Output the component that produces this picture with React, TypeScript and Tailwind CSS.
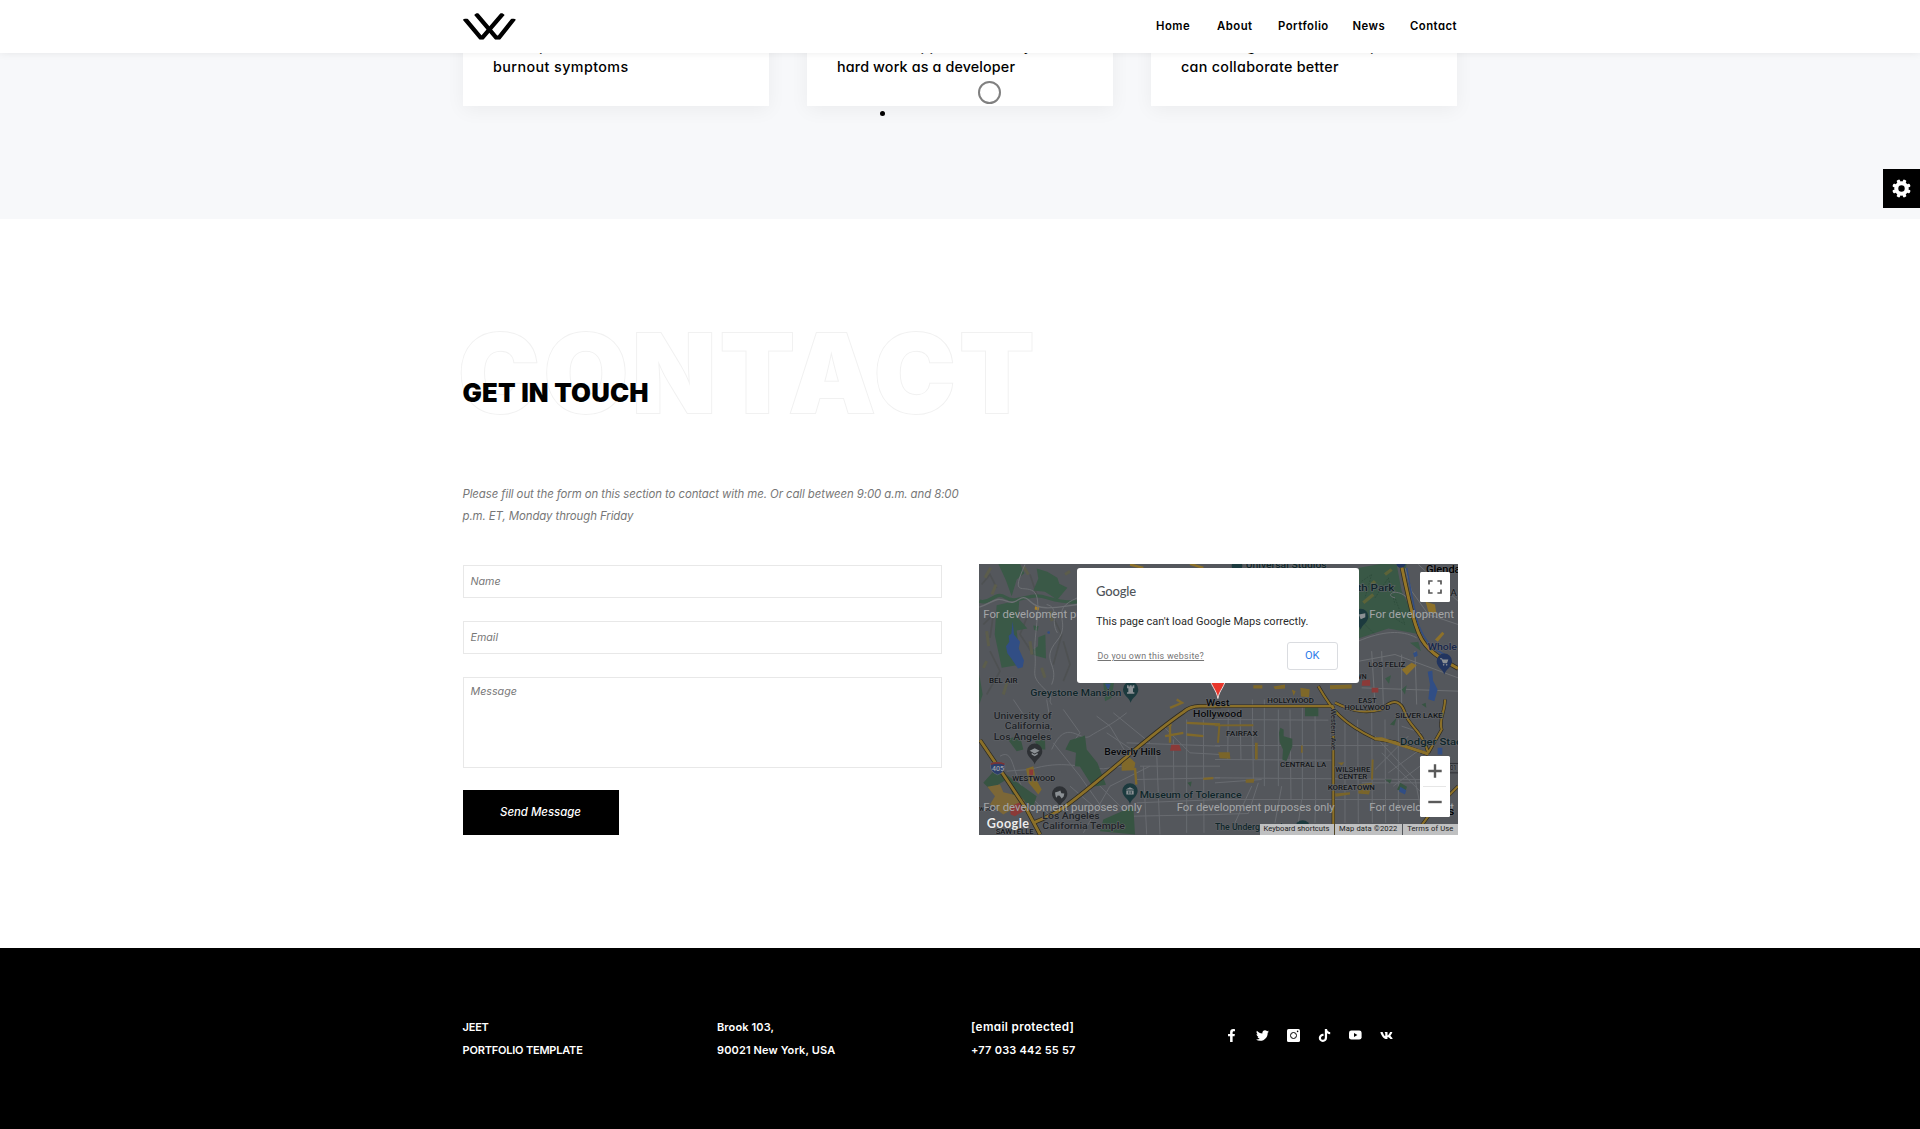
import React from "react";
import { FaFacebookF, FaTiktok, FaTwitter, FaVk } from "react-icons/fa";

const nav = [
  { label: "Home", cls: "w-[34px] mr-[27px]" },
  { label: "About", cls: "w-[35px] mr-[26px]" },
  { label: "Portfolio", cls: "w-[49px] mr-[25.5px]" },
  { label: "News", cls: "w-[32px] mr-[25.5px]" },
  { label: "Contact", cls: "w-[48px]" },
];

const cards = [
  { top: "The top causes of", bottom: "burnout symptoms", tracking: "tracking-[0.42px]" },
  { top: "How to be appreciated for your", bottom: "hard work as a developer", tracking: "tracking-[0.15px]" },
  { top: "How designers and developers", bottom: "can collaborate better", tracking: "tracking-[0.3px]" },
];

const gearTeeth = [22.5, 67.5, 112.5, 157.5, 202.5, 247.5, 292.5, 337.5];

function Logo() {
  return (
    <svg className="h-[27px] w-[53px]" viewBox="0 0 53 27" fill="none" stroke="#000" strokeWidth="4.3">
      <path d="M1.6 5.5 L17.6 24.6 H19.4 L40 0.6" clipPath="url(#cut)" />
      <path d="M51.2 5.5 L36 24.6 H33.2 L12.8 0.6" clipPath="url(#cut)" />
      <clipPath id="cut">
        <path d="M0 5.8 H10 V0.2 H43 V5.8 H53 V26.8 H0Z" />
      </clipPath>
    </svg>
  );
}

function Gear() {
  return (
    <svg className="size-[19px]" viewBox="-9.5 -9.5 19 19" fill="#fff">
      <circle r="7.2" />
      {gearTeeth.map((a) => (
        <rect key={a} x="-1.7" y="-9.3" width="3.4" height="4" rx="1.1" transform={`rotate(${a})`} />
      ))}
      <circle r="3.2" fill="#000" />
    </svg>
  );
}

function Instagram() {
  return (
    <svg className="size-[13px]" viewBox="0 0 13 13">
      <rect width="13" height="13" rx="1.6" fill="#fff" />
      <circle cx="6.5" cy="6.5" r="3" fill="none" stroke="#000" strokeWidth="1" />
      <circle cx="10.6" cy="2.4" r="0.8" fill="#000" />
    </svg>
  );
}

function Youtube() {
  return (
    <svg className="h-[10px] w-[13px]" viewBox="0 0 13 10">
      <rect y="0.4" width="12.6" height="9.2" rx="2.4" fill="#fff" />
      <path d="M5 3 L8.4 5 L5 7Z" fill="#000" />
    </svg>
  );
}

type LabelProps = {
  x: number;
  y: number;
  w: number;
  size: number;
  fill?: string;
  weight?: number;
  halo?: boolean;
  children: string;
};

function Label({ x, y, w, size, fill = "#131518", weight = 400, halo = true, children }: LabelProps) {
  return (
    <text
      x={x}
      y={y}
      textLength={w}
      lengthAdjust="spacingAndGlyphs"
      fontSize={size}
      fill={fill}
      fontWeight={weight}
      stroke={halo ? "#62656a" : "none"}
      strokeWidth={halo ? 3.5 : 0}
      paintOrder="stroke"
    >
      {children}
    </text>
  );
}

function Pin({ x, y, fill, children }: { x: number; y: number; fill: string; children?: React.ReactNode }) {
  return (
    <g transform={`translate(${x} ${y})`}>
      <path d="M0 38 C-4 22 -23 16 -23 -2 A23 23 0 0 1 23 -2 C23 16 4 22 0 38Z" fill={fill} />
      <g fill="#8b9094">{children}</g>
    </g>
  );
}

function MapCanvas() {
  const teal = "#1c3a3e";
  const tealText = "#0f2629";
  const gray = "#202327";
  return (
    <svg className="block h-full w-full" viewBox="979 564.5 479 270.5" preserveAspectRatio="none" fontFamily="Roboto, sans-serif">
      <rect x="979" y="564" width="479" height="272" fill="#54575c" />

      {/* north-west hills */}
      <g transform="translate(970 555) scale(.33333)">
        <g stroke="#4b4f4f" strokeWidth="5" fill="none" opacity=".7">
          <path d="M35 90 L60 60 L80 100 M40 210 L70 180 L60 250 M170 190 L150 240 L190 300 M240 170 L275 240 L250 330 M60 290 L90 350 L50 420 M180 60 L200 120 M280 260 L300 330 L280 380" />
        </g>
        <g stroke="#5c5d4c" strokeWidth="9" fill="none">
          <path d="M45 70 L62 40 M66 120 L78 90 M160 35 L175 60 M230 60 L250 85 M285 60 L300 50 M50 230 L56 275 M240 170 L246 200 M180 260 L186 300 M40 340 L50 320 M100 420 L112 380 M215 340 L225 370" />
        </g>
        <path d="M85 28 L150 28 L163 56 L140 75 L125 125 L108 78Z M200 42 L232 52 L262 70 L268 88 L292 100 L262 136 L225 112 L190 108 L205 72Z" fill="#3a5947" />
        <path d="M28 140 C60 152 75 108 105 128 S165 124 200 124 S250 146 322 142" stroke="#3a5947" strokeWidth="10" fill="none" />
        <path d="M80 152 L148 136 L144 190 L172 222 L140 228 L152 330 L95 340 L74 240Z M190 213 L206 215 L202 230 L192 226Z M205 248 L226 240 L228 312 L192 302 L190 285 L204 275Z" fill="#3a5947" />
        <path d="M128 200 L132 240 L150 262 L146 282 L162 318 L158 338 L144 342 L124 312 L112 296 L108 275 L118 262 L116 244 L124 238Z" fill="#314e85" />
        <path d="M195 155 L208 158 L206 168 L194 165Z" fill="#a77f2a" />
        <g stroke="#6c6f73" fill="none">
          <path d="M28 158 C70 145 75 125 110 140 S150 110 180 140 S250 160 322 150" strokeWidth="4" />
          <path d="M165 30 C120 130 160 90 190 110 S190 240 195 300 S180 360 220 400 S230 430 245 450 M322 130 C230 170 310 200 260 260 S270 330 245 390 M230 150 C270 160 240 200 262 235" strokeWidth="3" />
        </g>
        <circle cx="236" cy="234" r="4" fill="#314e85" />
        <path d="M28 360 L38 420 L28 450Z M400 385 L432 385 L425 430 L405 440Z" fill="#3a5947" />
        <path d="M405 388 L422 388 L415 408Z" fill="#314e85" />
        <path d="M480 30 L520 40 M660 28 L700 40" stroke="#8d712a" strokeWidth="7" />
      </g>

      {/* north-east */}
      <g transform="translate(1215 555) scale(.33333)">
        <path d="M432 40 L500 28 L545 30 L560 110 L600 190 L606 238 L520 222 L430 252Z M555 28 L575 28 L570 60Z" fill="#395846" />
        <path d="M440 80 L470 60 L450 130 M480 130 L520 70 L540 150 M440 200 L480 240 M520 180 L570 210 L540 130" stroke="#2d4a3a" strokeWidth="2.5" strokeDasharray="5 4" fill="none" />
        <path d="M445 145 L475 120 M510 60 L530 45 M470 90 L480 80" stroke="#5c6338" strokeWidth="10" />
        <g stroke="#6c6f73" strokeWidth="3" fill="none">
          <path d="M430 260 C500 230 560 225 605 250 M570 40 L590 110 L640 180 L729 210 M540 130 C500 120 560 90 590 150 M432 320 L540 300 L729 370 M470 290 L480 450 M500 290 L505 450 M560 300 L560 450 M600 290 L605 450 M440 400 L729 410 M610 30 L729 140" />
        </g>
        <path d="M560 35 C580 130 590 180 605 220 C620 270 650 300 729 342" stroke="#2c2920" strokeWidth="13" fill="none" />
        <path d="M560 35 C580 130 590 180 605 220 C620 270 650 300 729 342" stroke="#957628" strokeWidth="9" fill="none" />
        <path d="M575 40 C590 120 600 180 612 214 C630 262 655 285 690 300" stroke="#314e85" strokeWidth="4" fill="none" />
        <path d="M632 142 L660 150 L664 178 L640 172Z M660 255 L682 232 L688 238 L668 262Z M560 345 L590 325 L605 332 L575 362Z" fill="#8d712a" />
        <path d="M638 352 L652 348 L654 378 L668 405 L658 440 L640 434 L645 390Z M594 296 L606 290 L608 304 L598 308Z" fill="#314e85" />
        <path d="M585 265 L610 262 L618 290Z M510 372 L528 362 L522 388Z M560 405 L575 392 L570 420Z" fill="#3a5947" />
        <path d="M442 378 L465 376 L466 394 L440 394Z M470 400 L490 400 L490 414 L470 414Z" fill="#8b3a38" />
        <path d="M115 392 L142 392 L142 402 L115 402Z M175 396 L210 390 L210 402 L180 404Z M256 400 L284 404 L282 428 L258 426Z M345 392 L410 390 L410 402 L345 404Z M230 405 L242 410 L236 424Z" fill="#7f6829" />
      </g>

      {/* south-west */}
      <g transform="translate(970 700) scale(.33333)">
        <g stroke="#686b70" strokeWidth="3" fill="none">
          <path d="M110 215 L180 210 C280 180 330 205 400 208 L460 200 M245 150 C290 50 330 130 360 110 S420 80 470 40 M280 30 L330 100 L300 140 M380 50 L420 80 L480 180 M410 100 L500 160 M400 330 L330 230 L250 130 M90 170 C140 140 120 250 190 300 L240 350 M340 400 L420 260 L540 200 M520 200 L530 405 M560 160 L570 405 M610 120 L612 300 M650 60 L650 400 M700 60 L702 400 M500 240 L750 235 M500 310 L750 300 M510 200 L750 200 M470 130 L750 140 M430 40 L540 130 M130 0 L170 60 M230 0 L240 60 M490 350 L750 345 M380 250 L480 350 M580 80 L660 160 L750 165 M300 260 L370 320" />
        </g>
        <path d="M300 122 L345 108 L350 150 L382 190 L408 256 L368 262 L330 202 L315 200 L318 160 L286 150Z M40 250 L80 205 L200 290 L190 320 L130 290 L110 240 L60 270Z M490 320 L495 405 L390 395 L400 360Z M112 118 L150 110 L160 150 L140 155Z M195 125 L225 120 L226 150 L205 150Z M652 250 L665 246 L662 262Z M30 0 L34 60Z" fill="#375442" />
        <path d="M52 262 L90 255 L100 278 L150 290 L165 305 L100 345 L60 315 L75 290Z" fill="#7c6737" />
        <path d="M455 180 L480 175 L496 190 L492 212 L455 214Z M168 208 L176 250 L205 285 L215 270 L196 235 L190 200Z" fill="#80692a" />
        <path d="M495 205 L499 255 M570 85 L605 75 M585 110 L640 100 M620 0 L636 10 L600 25 M650 70 L750 75 M650 105 L700 110 M700 238 L730 236 M600 60 L600 130" stroke="#80692a" strokeWidth="7" fill="none" />
        <path d="M178 210 L190 210 L189 230 L178 226Z M120 322 L150 308 L160 335 L135 350 L122 345Z M604 136 L628 136 L634 154 L600 154Z" fill="#8b3a38" />
        <path d="M30 122 L100 225 L170 330 L210 405 M190 370 C240 350 260 340 300 310 C420 220 540 105 640 38 Q660 20 690 20 L752 20" stroke="#2c2920" strokeWidth="13" fill="none" />
        <path d="M30 122 L100 225 L170 330 L210 405 M190 370 C240 350 260 340 300 310 C420 220 540 105 640 38 Q660 20 690 20 L752 20" stroke="#8b7029" strokeWidth="8.5" fill="none" />
        <path d="M62 192 Q83 184 104 192 Q108 218 83 226 Q58 218 62 192Z" fill="#2c3e6b" stroke="#777b80" strokeWidth="1.5" />
        <path d="M62 194 Q83 186 104 194" stroke="#7a3434" strokeWidth="5" fill="none" />
      </g>

      {/* south-east */}
      <g transform="translate(1215 700) scale(.33333)">
        <g stroke="#686b70" strokeWidth="3" fill="none">
          <path d="M0 60 L340 62 M0 138 L520 138 M0 235 L620 240 M0 250 L140 240 M0 300 L620 300 M0 180 L350 182 M40 30 L38 180 M75 30 L78 180 M112 0 L115 240 M148 0 L148 260 M190 30 L190 260 M225 30 L228 300 M262 20 L262 300 M300 20 L302 300 M390 60 L390 370 M428 60 L430 370 M470 0 L472 370 M510 60 L512 370 M550 60 L550 370 M0 345 L100 342 L130 250 M60 370 L110 260 M180 370 L200 260 M250 370 L260 300 M300 370 L302 300 M480 110 L600 240 L620 340 M520 220 L615 150 M535 260 L615 200 M480 210 L580 110 M500 160 L620 280 M440 250 L620 250 M590 330 L700 350 M560 80 L620 100" />
        </g>
        <path d="M196 85 L206 90 L206 110 L232 118 L232 140 L214 185 L202 180 L204 150 L194 128 L192 100Z M270 22 L310 22 L310 50 L270 50Z M525 75 L545 55 L538 78Z M510 240 L530 240 L525 252Z M556 250 L576 262 L570 280 L546 270Z M620 15 L632 10 L634 25Z" fill="#375442" />
        <path d="M668 145 L682 145 L682 165 L668 165Z M556 262 L574 272 L570 285 L552 276Z" fill="#314e85" />
        <path d="M10 158 L44 158 L46 178 L14 176Z M120 130 L128 130 L128 180 L120 180Z M258 138 L263 138 L263 160 L258 160Z M92 240 L118 238 L116 250 L92 250Z M0 75 L115 74 L115 80 L0 80Z M10 80 L16 80 L12 130 L6 130Z M470 180 L476 180 L474 240 L468 240Z M368 190 L388 188 L380 198Z M360 282 L405 278 L405 285 L362 292Z M430 255 L472 250 L462 285 L430 282Z" fill="#7a652a" />
        <g fill="none">
          <path d="M0 20 L355 20 M355 20 L355 405 M310 -40 C350 30 380 70 480 118 L540 128 L640 165 M360 10 C420 40 460 40 500 30 C540 -10 560 10 570 40 C580 80 620 90 640 160 M690 0 C690 40 670 60 680 90 L640 160 M600 405 L640 350 L729 260" stroke="#2c2920" strokeWidth="10" />
          <path d="M0 20 L355 20 M355 20 L355 405 M310 -40 C350 30 380 70 480 118 L540 128 L640 165 M360 10 C420 40 460 40 500 30 C540 -10 560 10 570 40 C580 80 620 90 640 160 M690 0 C690 40 670 60 680 90 L640 160 M600 405 L640 350 L729 260" stroke="#8b7029" strokeWidth="6.5" />
        </g>
        <path d="M480 118 L500 118 L640 163" stroke="#8b7029" strokeWidth="9" fill="none" />
      </g>

      {/* pins and labels */}
      <g transform="translate(970 555) scale(.33333)">
        <Label x={57} y={386} w={86} size={20} weight={500}>BEL AIR</Label>
        <Label x={181} y={424} w={273} size={29} fill={tealText} weight={500}>Greystone Mansion</Label>
        <Pin x={482} y={407} fill={teal}>
          <path d="M-11 -15 H-6 V-11 H-3 V-15 H3 V-11 H6 V-15 H11 V-6 H7 V6 H11 V11 H-11 V6 H-7 V-6 H-11Z" />
        </Pin>
        <Label x={40} y={192} w={400} size={31} fill="#a4a6a8" halo={false}>For development purposes</Label>
      </g>
      <g transform="translate(1215 555) scale(.33333)">
        <circle cx="66" cy="34" r="16" fill={teal} />
        <Label x={92} y={41} w={243} size={25} fill={tealText} weight={500}>Universal Studios</Label>
        <Label x={375} y={109} w={163} size={29} fill={tealText} weight={500}>riffith Park</Label>
        <Label x={633} y={55} w={130} size={34} weight={500} fill="#000">Glendale</Label>
        <Label x={706} y={126} w={20} size={26}>A</Label>
        <Pin x={437} y={188} fill={teal}>
          <path d="M-5 -8 L14 -12 V0 L0 6Z" />
        </Pin>
        <circle cx="558" cy="26" r="14" fill="#22355f" />
        <Label x={463} y={192} w={254} size={31} fill="#a4a6a8" halo={false}>For development</Label>
        <Label x={638} y={286} w={88} size={29} fill="#18264a" weight={500}>Whole</Label>
        <Pin x={688} y={322} fill="#22355f">
          <path d="M-13 -11 H-7 L-5 -7 H12 L8 4 H-4 L-9 -8 H-13Z" />
          <circle cx="-2" cy="9" r="2.5" />
          <circle cx="7" cy="9" r="2.5" />
        </Pin>
        <Label x={460} y={338} w={111} size={20} weight={500}>LOS FELIZ</Label>
        <Label x={395} y={373} w={60} size={20} weight={500}>TOWN</Label>
        <Label x={157} y={446} w={140} size={20} weight={500}>HOLLYWOOD</Label>
        <Label x={430} y={446} w={55} size={20} weight={500}>EAST</Label>
      </g>
      <g transform="translate(970 700) scale(.33333)">
        <Label x={71} y={58} w={174} size={29} fill={gray} weight={500}>University of</Label>
        <Label x={104} y={90} w={143} size={29} fill={gray} weight={500}>California,</Label>
        <Label x={71} y={121} w={173} size={29} fill={gray} weight={500}>Los Angeles</Label>
        <Pin x={194} y={157} fill="#2e3135">
          <path d="M-15 -3 L0 -11 L15 -3 L0 5Z M-9 3 L0 8 L9 3 V8 L0 13 L-9 8Z" />
        </Pin>
        <Label x={66} y={216} w={36} size={19} fill="#9ea2a8" halo={false} weight={500}>405</Label>
        <Label x={127} y={244} w={129} size={20} weight={500}>WESTWOOD</Label>
        <Pin x={269} y={285} fill="#2e3135">
          <path d="M-14 -6 L-4 -9 L2 -12 L5 -4 L14 -3 L12 6 L6 12 L0 4 L-6 3 L-9 10 L-12 6Z" />
        </Pin>
        <Label x={403} y={167} w={170} size={29} fill="#08090a" weight={500}>Beverly Hills</Label>
        <Pin x={480} y={276} fill={teal}>
          <path d="M0 -13 L13 -6 H-13Z M-11 -3 H11 V9 H-11Z" />
          <path d="M-5 -1 H-2 V7 H-5Z M2 -1 H5 V7 H2Z" fill={teal} />
        </Pin>
        <Label x={509} y={296} w={306} size={29} fill={tealText} weight={500}>Museum of Tolerance</Label>
        <Label x={217} y={358} w={172} size={29} fill={gray} weight={500}>Los Angeles</Label>
        <Label x={217} y={389} w={248} size={29} fill={gray} weight={500}>California Temple</Label>
        <Label x={77} y={403} w={114} size={20} weight={500}>SAWTELLE</Label>
        <Label x={28} y={334} w={48} size={20}>wood</Label>
        <Label x={40} y={336} w={476} size={31} fill="#a4a6a8" halo={false}>For development purposes only</Label>
        <Label x={620} y={336} w={474} size={31} fill="#a4a6a8" halo={false}>For development purposes only</Label>
        <text x="50" y="386" fontFamily="Lato, sans-serif" fontWeight="700" fontSize="38" textLength="127" fill="#ececec" stroke="#4a4d51" strokeWidth="3" paintOrder="stroke">Google</text>
      </g>
      <g transform="translate(1215 700) scale(.33333)">
        <Label x={-27} y={20} w={70} size={29} fill="#08090a" weight={500}>West</Label>
        <Label x={-66} y={52} w={147} size={29} fill="#08090a" weight={500}>Hollywood</Label>
        <Label x={388} y={32} w={138} size={20} weight={500}>HOLLYWOOD</Label>
        <Label x={541} y={57} w={142} size={20} weight={500}>SILVER LAKE</Label>
        <Label x={33} y={111} w={95} size={20} weight={500}>FAIRFAX</Label>
        <Label x={555} y={136} w={196} size={29} fill={tealText} weight={500}>Dodger Stadi</Label>
        <Label x={195} y={202} w={139} size={20} weight={500}>CENTRAL LA</Label>
        <Label x={361} y={219} w={105} size={20} weight={500}>WILSHIRE</Label>
        <Label x={369} y={240} w={88} size={20} weight={500}>CENTER</Label>
        <Label x={338} y={273} w={142} size={20} weight={500}>KOREATOWN</Label>
        <g transform="translate(348 27) rotate(90)">
          <Label x={0} y={0} w={124} size={20}>Western Ave</Label>
        </g>
        <rect x="690" y="192" width="50" height="28" rx="8" fill="#54575c" stroke="#303338" strokeWidth="3" />
        <Label x={705} y={213} w={20} size={20}>01</Label>
        <Label x={0} y={391} w={202} size={29} fill={tealText} weight={500}>The Underground</Label>
        <circle cx="263" cy="384" r="22" fill={teal} />
        <Label x={463} y={336} w={254} size={31} fill="#a4a6a8" halo={false}>For development</Label>
        <Label x={698} y={347} w={20} size={34} fill="#000" weight={500}>s</Label>
      </g>

      {/* location marker */}
      <path d="M1208.5 676 H1226.5 C1225 688 1219.4 690 1217.9 699 C1216.4 690 1210.5 686 1208.5 676Z" fill="#e8372c" stroke="#fff" strokeWidth=".8" />
    </svg>
  );
}

function MapPanel() {
  return (
    <div className="relative h-[270.5px] w-[479px] overflow-hidden font-[Roboto,sans-serif]">
      <MapCanvas />
      <div className="absolute left-[98px] top-[3.8px] flex h-[115px] w-[282.5px] flex-col rounded-[3px] bg-white pl-[19.5px] pr-[21px]">
        <div className="mt-[14px] h-[18px] font-[Lato,sans-serif] text-[13px] font-medium leading-[18px] tracking-[-0.15px] text-[#4f5459]">Google</div>
        <div className="mt-[14.5px] h-[16px] whitespace-nowrap text-[11px] leading-[16px] tracking-[0px] text-[#2b2b2b]">This page can't load Google Maps correctly.</div>
        <div className="mt-[12px] flex items-center justify-between">
          <span className="ml-[1.5px] whitespace-nowrap text-[8.9px] leading-[12px] tracking-[0.28px] text-[#757575] underline">Do you own this website?</span>
          <span className="flex h-[27.5px] w-[51.5px] items-center justify-center rounded-[3px] border border-[#dadce0] text-[11px] text-[#2d7bea]">OK</span>
        </div>
      </div>
      <div className="absolute left-[441px] top-[7.5px] flex size-[30.5px] items-center justify-center rounded-[1.5px] bg-white">
        <svg className="size-[14px]" viewBox="0 0 14 14" fill="none" stroke="#555" strokeWidth="1.7">
          <path d="M1 4.6 V1 H4.6 M9.4 1 H13 V4.6 M13 9.4 V13 H9.4 M4.6 13 H1 V9.4" />
        </svg>
      </div>
      <div className="absolute left-[441px] top-[191.5px] flex h-[61px] w-[30.5px] flex-col items-center rounded-[1.5px] bg-white">
        <svg className="h-[30px] w-[14px]" viewBox="0 0 14 30" stroke="#5a5a5a" strokeWidth="2.4">
          <path d="M0.3 15 H13.7 M7 8.3 V21.7" />
        </svg>
        <div className="h-px w-[23px] bg-[#e6e6e6]" />
        <svg className="h-[30px] w-[14px]" viewBox="0 0 14 30" stroke="#5a5a5a" strokeWidth="2.4">
          <path d="M0.3 15 H13.7" />
        </svg>
      </div>
      <div className="absolute bottom-0 right-0 flex h-[10.5px] items-center text-[7.6px] leading-[10px] whitespace-nowrap text-[#1b1b1b]">
        <span className="flex h-full w-[74px] items-center justify-center bg-[#bfc0c1]">Keyboard shortcuts</span>
        <span className="ml-px flex h-full w-[67.5px] items-center justify-center bg-[#bfc0c1] tracking-[0.1px]">Map data ©2022</span>
        <span className="ml-px flex h-full w-[54.5px] items-center justify-center bg-[#bfc0c1] tracking-[0.1px]">Terms of Use</span>
      </div>
    </div>
  );
}

export default function App() {
  return (
    <div className="relative flex h-[1129px] w-[1920px] flex-col overflow-hidden bg-white font-[Inter,sans-serif] text-black [font-feature-settings:'cv11'_1]">
      <header className="relative z-10 flex h-[53px] shrink-0 items-start justify-between bg-white pl-[463px] pr-[462px] shadow-[0_0_8px_rgba(0,0,0,0.08)]">
        <div className="pt-[13px]">
          <Logo />
        </div>
        <nav className="flex pt-[18px] text-[11.3px] font-semibold leading-[17px] tracking-[0.5px]">
          {nav.map((n) => (
            <a key={n.label} className={`whitespace-nowrap ${n.cls}`}>{n.label}</a>
          ))}
        </nav>
      </header>

      <section className="h-[166px] shrink-0 bg-[#f7f8fa] px-[463px]">
        <div className="-mt-[20px] flex gap-[38px]">
          {cards.map((c) => (
            <article key={c.bottom} className={`h-[73px] w-[306px] whitespace-nowrap bg-white pl-[30px] pt-[3px] text-[14.3px] font-medium leading-[20.5px] shadow-[0_4px_18px_rgba(0,0,0,0.05)] ${c.tracking}`}>
              <div>{c.top}</div>
              <div>{c.bottom}</div>
            </article>
          ))}
        </div>
      </section>

      <main className="flex h-[729px] shrink-0 flex-col px-[462.5px]">
        <div className="relative mt-[92px] h-[124px]">
          <div className="absolute left-[-4.5px] top-0 whitespace-nowrap text-[109.5px] font-black leading-[124px] tracking-[3.6px] text-white [-webkit-text-stroke:2px_#f1f1f1] [paint-order:stroke_fill]">CONTACT</div>
          <h2 className="absolute left-0 top-[65px] whitespace-nowrap text-[25.7px] font-black leading-[34px] tracking-[0.2px]">GET IN TOUCH</h2>
        </div>
        <p className="mt-[47.5px] h-[45px] whitespace-nowrap text-[11.4px] italic leading-[22.4px] tracking-[-0.08px] text-[#777]">
          Please fill out the form on this section to contact with me. Or call between 9:00 a.m. and 8:00
          <br />
          p.m. ET, Monday through Friday
        </p>
        <div className="mt-[36.5px] flex justify-between">
          <form className="mt-[0.5px] flex w-[479px] flex-col items-start text-[10.7px] italic tracking-[0px] text-[#777]">
            <div className="flex h-[33.5px] w-full items-center border border-[#e8e8e8] pl-[7px] pt-px">Name</div>
            <div className="mt-[22.5px] flex h-[33.5px] w-full items-center border border-[#e8e8e8] pl-[7px] pt-px">Email</div>
            <div className="mt-[22.5px] h-[91px] w-full border border-[#e8e8e8] pl-[7px] pt-[6.5px] leading-[16px]">Message</div>
            <button className="mt-[22.5px] flex h-[45px] w-[156px] items-center justify-center bg-black pt-px text-[11.4px] font-medium italic tracking-[0px] text-white">Send Message</button>
          </form>
          <MapPanel />
        </div>
      </main>

      <footer className="flex h-[181px] shrink-0 bg-black pl-[462.5px] pt-[68px] text-[11px] font-semibold leading-[22.6px] text-white">
        <div className="w-[254.5px] whitespace-nowrap tracking-[-0.2px]">
          <div>JEET</div>
          <div>PORTFOLIO TEMPLATE</div>
        </div>
        <div className="w-[254px] whitespace-nowrap tracking-[0.12px]">
          <div>Brook 103,</div>
          <div>90021 New York, USA</div>
        </div>
        <div className="w-[254px] whitespace-nowrap">
          <div className="text-[11.7px] tracking-[0.35px]">[email protected]</div>
          <div className="tracking-[0.22px]">+77 033 442 55 57</div>
        </div>
        <div className="mt-[12.5px] flex h-[13px] items-center gap-[18px] text-[13px]">
          <span className="flex w-[13px] justify-center"><FaFacebookF /></span>
          <FaTwitter />
          <Instagram />
          <span className="flex w-[13px] justify-center"><FaTiktok /></span>
          <Youtube />
          <FaVk />
        </div>
      </footer>

      <div className="absolute right-0 top-[169px] flex h-[39px] w-[37px] items-center justify-center bg-black">
        <Gear />
      </div>
      <div className="absolute left-[978px] top-[81px] size-[23px] rounded-full border-2 border-[#808080]" />
      <div className="absolute left-[880px] top-[110.5px] size-[5px] rounded-full bg-black" />
    </div>
  );
}
